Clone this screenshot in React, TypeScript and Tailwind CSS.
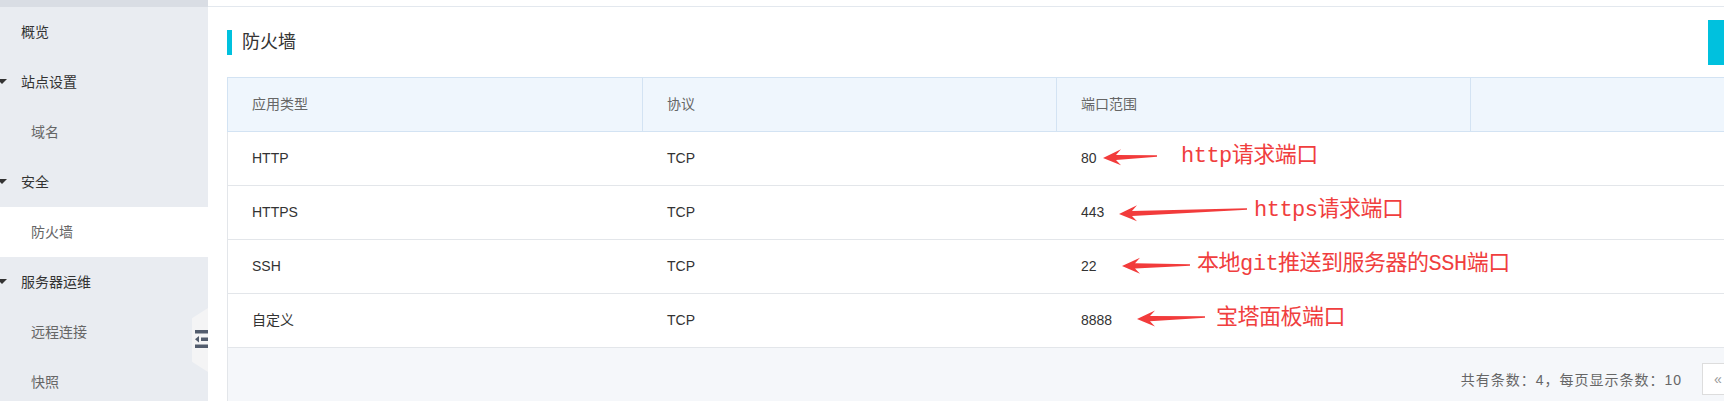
import React from 'react';

const UI_FONT = { fontFamily: '"Liberation Sans", "Noto Sans CJK SC", sans-serif' };
const NOTE_FONT = { fontFamily: '"Liberation Mono", "Noto Sans CJK SC", monospace' };

type NavItem = { label: string; level: 0 | 1; caret?: boolean; active?: boolean };

const nav: NavItem[] = [
  { label: '概览', level: 0 },
  { label: '站点设置', level: 0, caret: true },
  { label: '域名', level: 1 },
  { label: '安全', level: 0, caret: true },
  { label: '防火墙', level: 1, active: true },
  { label: '服务器运维', level: 0, caret: true },
  { label: '远程连接', level: 1 },
  { label: '快照', level: 1 },
];

// annotation geometry is relative to the left edge of the port column
const rules = [
  { type: 'HTTP', proto: 'TCP', port: '80', note: 'http请求端口', tip: 47, tipDy: 0, tail: 101, tailDy: -2, textX: 125 },
  { type: 'HTTPS', proto: 'TCP', port: '443', note: 'https请求端口', tip: 63, tipDy: 2, tail: 191, tailDy: -3, textX: 198 },
  { type: 'SSH', proto: 'TCP', port: '22', note: '本地git推送到服务器的SSH端口', tip: 66, tipDy: 0, tail: 134, tailDy: -1, textX: 141 },
  { type: '自定义', proto: 'TCP', port: '8888', note: '宝塔面板端口', tip: 81, tipDy: -1, tail: 149, tailDy: -3, textX: 160 },
];

function arrowPoints(x0: number, y0: number, x1: number, y1: number) {
  const slope = (y1 - y0) / (x1 - x0);
  const at = (dx: number) => y0 + slope * dx;
  return [
    [x0, y0],
    [x0 + 18, at(18) - 8],
    [x0 + 13, at(13) - 2.6],
    [x1, y1 - 0.8],
    [x1, y1 + 0.8],
    [x0 + 13, at(13) + 2.6],
    [x0 + 18, at(18) + 8],
  ]
    .map((p) => p.join(','))
    .join(' ');
}

function Sidebar() {
  return (
    <aside className="relative w-[208px] shrink-0 bg-[#e9ecf1]">
      <div className="h-[7px] bg-[#d9dde4]" />
      {nav.map((item) => (
        <div
          key={item.label}
          className={`flex h-[50px] items-center text-[14px] ${item.active ? 'bg-white' : ''} ${
            item.level === 0 ? 'text-[#333]' : 'text-[#666]'
          }`}
        >
          {item.caret ? (
            <svg width="10" height="5" viewBox="0 0 10 5" className="-ml-[3px] mr-[14px] -mt-[2px]">
              <polygon points="0,0 10,0 5,5" fill="#333" />
            </svg>
          ) : (
            <span className={item.level === 0 ? 'w-[21px]' : 'w-[31px]'} />
          )}
          <span>{item.label}</span>
        </div>
      ))}

      {/* collapse handle */}
      <div
        className="absolute left-[192px] top-[308px] h-[64px] w-[16px] bg-[#f4f4f5]"
        style={{ clipPath: 'polygon(100% 0, 100% 100%, 0 84%, 0 16%)' }}
      >
        <svg width="13" height="18" viewBox="0 0 13 18" className="absolute left-[3px] top-[22px]">
          <rect x="0" y="0" width="13" height="3.5" fill="#525c6d" />
          <rect x="6" y="7.5" width="7" height="3.5" fill="#525c6d" />
          <polygon points="0,9.25 4,6 4,12.5" fill="#525c6d" />
          <rect x="0" y="14.5" width="13" height="3.5" fill="#525c6d" />
        </svg>
      </div>
    </aside>
  );
}

export default function App() {
  return (
    <div className="flex h-[401px] w-[1724px] overflow-hidden bg-white" style={UI_FONT}>
      <Sidebar />

      <main className="min-w-0 flex-1 overflow-hidden">
        <div className="h-[7px] border-b border-[#e3e8ee]" />

        <div className="w-[1676px] pl-[19px]">
          {/* title row */}
          <div className="mt-[13px] flex h-[45px] items-center">
            <span className="h-[25px] w-[5px] bg-[#00c1de]" />
            <h1 className="ml-[10px] text-[18px] font-normal text-[#333]">防火墙</h1>
            <button className="ml-auto h-[45px] w-[176px] bg-[#00c1de]" aria-label="添加规则" />
          </div>

          {/* table */}
          <div className="mt-[12px] w-[1657px]">
            <div className="grid h-[55px] grid-cols-[414px_414px_414px_414px] border-y border-l border-[#d3e3f3] bg-[#eff6fd] text-[14px] text-[#666]">
              <div className="flex items-center px-6">应用类型</div>
              <div className="flex items-center border-l border-[#d3e3f3] px-6">协议</div>
              <div className="flex items-center border-l border-[#d3e3f3] px-6">端口范围</div>
              <div className="border-l border-[#d3e3f3]" />
            </div>

            {rules.map((r) => (
              <div
                key={r.type}
                className="grid h-[54px] grid-cols-[414px_414px_414px_414px] border-b border-l border-[#e3e6ea] text-[14px] text-[#333]"
              >
                <div className="flex items-center px-6">{r.type}</div>
                <div className="flex items-center pl-[25px]">{r.proto}</div>
                <div className="relative flex items-center pl-[25px]">
                  {r.port}
                  <svg
                    className="pointer-events-none absolute left-0 top-0 overflow-visible"
                    width="500"
                    height="53"
                  >
                    <polygon points={arrowPoints(r.tip, 26 + r.tipDy, r.tail, 26 + r.tailDy)} fill="#f23b3b" />
                  </svg>
                  <span
                    className="absolute top-[11px] whitespace-nowrap text-[22px] leading-[28px] tracking-[-0.5px] text-[#f03e3e]"
                    style={{ ...NOTE_FONT, left: r.textX }}
                  >
                    {r.note}
                  </span>
                </div>
                <div />
              </div>
            ))}

            {/* footer */}
            <div className="flex h-[60px] justify-end border-l border-[#e3e6ea] bg-[#f5f7fa] pr-[26px] pt-[15px] text-[14px] text-[#666]">
              <span className="mt-[7px] tracking-[1px]">共有条数：4，每页显示条数：10</span>
              <div className="ml-5 flex h-8">
                <span className="flex w-8 items-center justify-center border border-[#dddddd] bg-white text-[#999]">«</span>
                {[0, 1, 2, 3].map((i) => (
                  <span key={i} className="-ml-px w-8 border border-[#dddddd] bg-white" />
                ))}
              </div>
            </div>
          </div>
        </div>
      </main>
    </div>
  );
}
